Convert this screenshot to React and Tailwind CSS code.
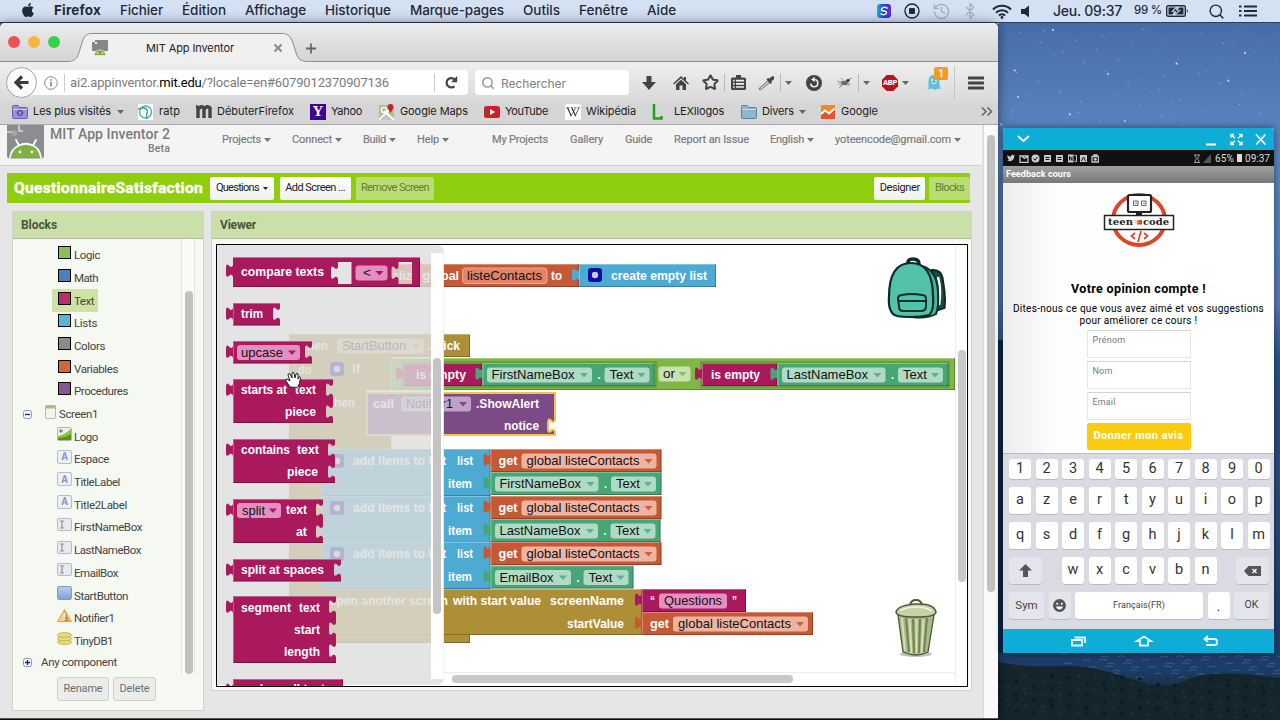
import React, { useLayoutEffect, useRef, useState } from "react";
import { Search, Star, History, Bluetooth } from "lucide-react";
import { FaApple, FaTwitter, FaWikipediaW } from "react-icons/fa";

// Text that is tracked in or out until it is exactly w pixels wide.
function Fit({ w, className = "", children }) {
  const ref = useRef(null);
  const [spacing, setSpacing] = useState(0);

  useLayoutEffect(() => {
    const natural = ref.current.getBoundingClientRect().width;
    setSpacing((w - natural) / ref.current.textContent.length);
  }, [w]);

  return (
    <span className={`block shrink-0 whitespace-nowrap ${className}`} style={{ width: w }}>
      <span ref={ref} style={{ letterSpacing: spacing }}>
        {children}
      </span>
    </span>
  );
}

function Caret({ className = "text-[#777]" }) {
  return (
    <svg width="7" height="4" viewBox="0 0 7 4" className={`shrink-0 ${className}`}>
      <path d="M0 0H7L3.5 4Z" fill="currentColor" />
    </svg>
  );
}

/* ---------- desktop ---------- */

const stars = Array.from({ length: 190 }, (_, i) => ({
  x: 998 + ((i * 97.3 + (i % 7) * 31) % 282),
  y: 23 + ((i * 53.7 + (i % 11) * 17) % 112),
  r: i % 17 === 0 ? 0.9 : i % 5 === 0 ? 0.55 : 0.35,
}));

const waves = Array.from({ length: 60 }, (_, i) => ({
  x: 1060 + ((i * 71.3) % 220),
  y: 654 + ((i * 13.7) % 24),
}));

const trees = Array.from({ length: 120 }, (_, i) => ({
  x: 998 + ((i * 61.7) % 282),
  y: 676 + ((i * 19.3) % 42),
}));

function Wallpaper() {
  return (
    <svg className="absolute inset-0" width="1280" height="720">
      <defs>
        <linearGradient id="sky" x1="0" y1="0" x2="0" y2="1">
          <stop offset="0" stopColor="#41659d" />
          <stop offset="0.06" stopColor="#4a72ad" />
          <stop offset="0.2" stopColor="#5b87c2" />
          <stop offset="0.42" stopColor="#5580b8" />
          <stop offset="0.5" stopColor="#2a568c" />
          <stop offset="0.7" stopColor="#254d80" />
          <stop offset="0.93" stopColor="#1c3c68" />
          <stop offset="0.96" stopColor="#16303f" />
          <stop offset="1" stopColor="#0c1519" />
        </linearGradient>
      </defs>
      <rect width="1280" height="720" fill="url(#sky)" />
      {stars.map((s, i) => (
        <circle key={i} cx={s.x} cy={s.y} r={s.r} fill="#dbe9fb" opacity={i % 17 === 0 ? 1 : 0.6} />
      ))}
      <path d="M998 340h5v313h-5z" fill="#0b2b50" />
      {waves.map((s, i) => (
        <path key={i} d={`M${s.x} ${s.y}q4-2 8 0`} stroke="#6f92bd" strokeWidth=".8" fill="none" opacity=".5" />
      ))}
      <path d="M998 662q30 6 60 4t70 12 60 2 92-2V720H998z" fill="#14252c" />
      {trees.map((t, i) => (
        <circle key={i} cx={t.x} cy={t.y} r="2" fill={i % 2 ? "#1d3236" : "#0c171b"} opacity=".7" />
      ))}
    </svg>
  );
}

const menus = [
  ["Fichier", 43],
  ["Édition", 44],
  ["Affichage", 61],
  ["Historique", 66],
  ["Marque-pages", 94],
  ["Outils", 37],
  ["Fenêtre", 49],
  ["Aide", 29],
];

function MenuBar() {
  return (
    <div className="relative flex h-[23px] items-center border-b border-[#2f3f5e] bg-[#d4e1f3] pl-5 font-[Inter,sans-serif] text-[13.500px] leading-none font-medium text-[#1f2a3d]">
      <FaApple size={16} className="-mt-0.5 shrink-0" />
      <div className="ml-[18px] flex gap-[19px]">
        <Fit w={47} className="font-bold">Firefox</Fit>
        {menus.map(([label, w]) => (
          <Fit key={label} w={w}>{label}</Fit>
        ))}
      </div>
      <div className="ml-[201px] flex items-center">
        <svg width="14" height="14" viewBox="0 0 14 14">
          <defs>
            <linearGradient id="snag" x1="0" x2="1">
              <stop offset="0" stopColor="#16b4e4" />
              <stop offset=".5" stopColor="#2440c4" />
              <stop offset="1" stopColor="#6d2bd0" />
            </linearGradient>
          </defs>
          <rect width="14" height="14" rx="3" fill="url(#snag)" />
          <path d="M10.500 4.500C9 2.500 5 3 4.500 5.500Q4.500 7 7 7T9.500 8.800C9 11 5.500 11.300 3.500 9.500" fill="none" stroke="#fff" strokeWidth="1.400" />
        </svg>
        <svg width="16" height="16" viewBox="0 0 16 16" className="ml-[13px]">
          <circle cx="8" cy="8" r="7" fill="none" stroke="currentColor" strokeWidth="1.400" />
          <rect x="5" y="5" width="6" height="6" rx="1" fill="currentColor" />
        </svg>
        <History size={19} strokeWidth={1.700} className="ml-[12px] text-[#a3aec2]" />
        <Bluetooth size={18} strokeWidth={1.700} className="ml-[10px] text-[#a3aec2]" />
        <svg width="20" height="15" viewBox="0 0 20 15" className="ml-[13px]">
          <g fill="none" stroke="currentColor" strokeWidth="2.100">
            <path d="M1 5.600a12.600 12.600 0 0 1 18 0" />
            <path d="M4 8.700a8.400 8.400 0 0 1 12 0" />
            <path d="M6.900 11.600a4.400 4.400 0 0 1 6.200 0" />
          </g>
          <circle cx="10" cy="13.500" r="1.400" fill="currentColor" />
        </svg>
        <svg width="10" height="13" viewBox="0 0 10 13" className="ml-[9px]">
          <path d="M0 4h3.500L8 .5V12.500L3.500 9H0Z" fill="currentColor" />
        </svg>
        <Fit w={69} className="ml-[22px] text-[14px]">Jeu. 09:37</Fit>
        <Fit w={28} className="ml-[12px] text-[11.500px]">99 %</Fit>
        <svg width="23" height="12" viewBox="0 0 23 12" className="ml-1">
          <rect x=".7" y=".7" width="18.600" height="10.600" rx="1.500" fill="none" stroke="currentColor" strokeWidth="1.400" />
          <path d="M2.500 2.500H9.500L5 6.800H8.500L6.500 9.500H2.500ZM17.500 9.500H10L15 5H11.500L13 2.500H17.500Z" fill="currentColor" />
          <path d="M11.500 1.500L6.500 6.800H10L8 10.500L13.500 5H10.200Z" fill="#1f2a3d" stroke="#d4e1f3" strokeWidth=".7" />
          <path d="M20.800 4q2 2 0 4z" fill="currentColor" />
        </svg>
        <Search size={17} strokeWidth={2} className="ml-[19px]" />
        <svg width="18" height="12" viewBox="0 0 18 12" className="ml-[14px]">
          <path d="M5 1.500H18M5 6H18M5 10.500H18M0 1.500H2.500M0 6H2.500M0 10.500H2.500" stroke="currentColor" strokeWidth="1.900" />
        </svg>
      </div>
    </div>
  );
}

/* ---------- browser chrome ---------- */

function TabStrip() {
  return (
    <div className="relative h-[39px] shrink-0 bg-linear-to-b from-[#ececec] to-[#d3d3d3]">
      <svg className="absolute inset-0" width="998" height="39">
        <path
          d="M0 38.500H68C78 38.500 78 32 81 23C84 13 85 10.500 94 10.500H280C290 10.500 291 14 294 23C297 33 298 38.500 307 38.500H998"
          fill="none"
          stroke="#8d8d8d"
        />
        <path d="M69 39C78 38.500 79 32 82 23C85 13 86 11 94 11H280C289 11 290 14 293 23C296 33 297 38.500 306 39Z" fill="#f0f0f0" />
        <circle cx="14" cy="19" r="6" fill="#ef4f57" />
        <circle cx="34" cy="19" r="6" fill="#f6b63c" />
        <circle cx="54" cy="19" r="6" fill="#35d14b" />
        <path d="M274.500 21.500l7 7m0-7l-7 7" stroke="#8c8c8c" strokeWidth="2.200" />
        <path d="M311 20.500v10M306 25.500h10" stroke="#666" strokeWidth="1.800" />
      </svg>
      <div className="relative flex h-full items-center pt-2.5 pl-[92px]">
        <svg width="16" height="16" viewBox="0 0 16 16">
          <path d="M0 2h3v2h2V2H3V0h13v11H0Z" fill="#858789" />
          <path d="M2 15.500Q2.500 10.500 8 9.800Q13.500 10.500 14 15.500Z" fill="#86ad3c" stroke="#f0f0f0" strokeWidth=".7" />
          <circle cx="5.500" cy="13" r=".8" fill="#fff" />
          <circle cx="10.500" cy="13" r=".8" fill="#fff" />
        </svg>
        <Fit w={88} className="ml-[38px] pt-0.5 font-[Inter,sans-serif] text-[11px] text-[#222]">MIT App Inventor</Fit>
      </div>
    </div>
  );
}

function Divider() {
  return <div className="h-[18px] w-px shrink-0 bg-[#b9b9b9]" />;
}

function NavBar() {
  return (
    <div className="flex h-[41px] shrink-0 items-center bg-linear-to-b from-[#efefef] to-[#d9d9d9] pl-1.5 text-[#444]">
      <div className="relative z-10 flex size-[31px] shrink-0 items-center justify-center rounded-full border border-[#a5a5a5] bg-[#fbfbfb]">
        <svg width="15" height="15" viewBox="0 0 15 15">
          <path d="M14.500 7.500H3M8 1.500L2 7.500L8 13.500" fill="none" stroke="#3d3d3d" strokeWidth="3.200" />
        </svg>
      </div>
      <div className="-ml-1.5 flex h-[25px] w-[437px] shrink-0 items-center rounded-r-sm bg-white pl-[13px]">
        <svg width="14" height="14" viewBox="0 0 14 14">
          <circle cx="7" cy="7" r="6.300" fill="none" stroke="#888" />
          <path d="M7 6v4.500M7 3.200v1.600" stroke="#777" strokeWidth="1.500" />
        </svg>
        <div className="ml-1.5 h-[18px] w-px bg-[#ccc]" />
        <Fit w={319} className="ml-[5px] font-[Roboto,sans-serif] text-[13px] text-[#7c7c7c]">
          ai2.appinventor.<span className="text-black">mit.edu</span>/?locale=en#6079012370907136
        </Fit>
        <div className="ml-[45px] h-[18px] w-px bg-[#ccc]" />
        <svg width="13" height="13" viewBox="0 0 13 13" className="ml-2.5">
          <path d="M9.500 10.200A4.700 4.700 0 1 1 10 3.800" fill="none" stroke="#444" strokeWidth="2.200" />
          <path d="M12.200 0V6.200H6Z" fill="#444" />
        </svg>
      </div>
      <div className="ml-[7px] flex h-[25px] w-[154px] shrink-0 items-center rounded-sm bg-white pl-1.5">
        <Search size={14} strokeWidth={2.600} className="text-[#999]" />
        <Fit w={65} className="ml-1.5 pt-0.5 font-[Inter,sans-serif] text-[12px] text-[#808080]">Rechercher</Fit>
      </div>
      <div className="ml-[5px] flex items-center">
        <div className="flex w-[30px] justify-center">
          <svg width="14" height="14" viewBox="0 0 14 14">
            <path d="M4.500 0h5v6H14L7 14L0 6H4.500Z" fill="#444" />
          </svg>
        </div>
        <div className="flex w-[33px] justify-center">
          <svg width="16" height="14" viewBox="0 0 16 14">
            <path d="M8 0L11 2.800V1h2v3.700L16 7.500L15 8.600L8 2.300L1 8.600L0 7.500Z" fill="#444" />
            <path d="M8 3.800L13 8.300V14H9.500V9.500H6.500V14H3V8.300Z" fill="#444" />
          </svg>
        </div>
        <div className="flex w-[27px] justify-center">
          <Star size={17} strokeWidth={2.800} />
        </div>
        <Divider />
        <div className="flex w-[27px] justify-center">
          <svg width="15" height="15" viewBox="0 0 15 15">
            <path d="M5 0h5v2.500H13.500q1.500 0 1.500 1.500V13.500q0 1.500-1.500 1.500H1.500Q0 15 0 13.500V4Q0 2.500 1.500 2.500H5Z" fill="#444" />
            <path d="M2 5.600H3.700M5 5.600H13M2 8.800H3.700M5 8.800H13M2 12H3.700M5 12H13" stroke="#eee" strokeWidth="1.700" />
          </svg>
        </div>
        <div className="flex w-[28px] justify-center">
          <svg width="17" height="14" viewBox="0 0 17 14">
            <path d="M1 12.500L9.500 5L11.500 7L3 13.500H1Z" fill="#c9c9c9" stroke="#777" />
            <path d="M8.500 3.500L12.500 8L14 6.500L13.300 5.200Q17 3.600 16 1T11.500 2.500L10 2Z" fill="#444" />
          </svg>
        </div>
        <Divider />
        <div className="flex w-[15px] justify-center"><Caret className="text-[#666]" /></div>
        <div className="flex w-[35px] justify-center">
          <svg width="16" height="16" viewBox="0 0 16 16">
            <circle cx="8" cy="8" r="8" fill="#444" />
            <path d="M4.600 8.500A3.600 3.600 0 1 0 8.500 4.500" fill="none" stroke="#eee" strokeWidth="1.600" />
            <path d="M8.800 1.800V7L5 4.400Z" fill="#eee" />
          </svg>
        </div>
        <div className="flex w-[27px] justify-center">
          <svg width="16" height="12" viewBox="0 0 16 12">
            <path d="M1 7L15 1M2 11L13 2M0 4L14 7M4 1L10 9M12 9L9 4M3 9L6 4" stroke="#777" strokeWidth=".7" />
            <ellipse cx="7.500" cy="6" rx="3.200" ry="2" fill="#6a6a6a" />
            <circle cx="11" cy="3.500" r="1.600" fill="#333" />
          </svg>
        </div>
        <Divider />
        <div className="flex w-[14px] justify-center"><Caret className="text-[#666]" /></div>
        <div className="ml-[5px] flex w-[24px] justify-center">
          <div className="relative flex h-4 w-4 items-center justify-center">
            <svg className="absolute inset-0" width="16" height="16" viewBox="0 0 16 16">
              <path d="M4.700 0H11.300L16 4.700V11.300L11.300 16H4.700L0 11.300V4.700Z" fill="#b81322" />
            </svg>
            <span className="relative font-[Roboto,sans-serif] text-[7.500px] font-black tracking-[-0.300px] text-white">ABP</span>
          </div>
        </div>
        <Caret className="text-[#666]" />
        <div className="relative ml-[12px] flex w-[25px] justify-center">
          <svg width="14" height="15" viewBox="0 0 14 15">
            <path d="M1.500 13V5.500Q2 0 7 0T12.500 5.500V11L14 14L10.500 13.500L8 15L5 13.500L0 14.500Z" fill="#5ec0dd" />
            <circle cx="5" cy="5" r="1" fill="#fff" />
            <circle cx="9" cy="5" r="1" fill="#fff" />
            <path d="M4.500 7.500Q7 10 9.500 7.500" stroke="#fff" fill="none" />
          </svg>
          <div className="absolute -top-[8px] left-[13px] flex h-[13px] w-[14px] items-center justify-center rounded-[2px] bg-[#f29d1e] font-[Roboto,sans-serif] text-[10px] font-bold text-white">
            1
          </div>
        </div>
        <div className="ml-[8px] h-[34px] w-px bg-[#c6c6c6]" />
        <svg width="16" height="14" viewBox="0 0 16 14" className="ml-[13px]">
          <path d="M1 2H15M1 7H15M1 12H15" stroke="#444" strokeWidth="3" strokeLinecap="round" />
        </svg>
      </div>
    </div>
  );
}

function Folder({ fill, stroke }) {
  return (
    <svg width="16" height="14" viewBox="0 0 16 14">
      <path d="M.5 1.500q0-1 1-1H6L7.500 2.500H14.500q1 0 1 1V12.500q0 1-1 1H1.500q-1 0-1-1Z" fill={fill} stroke={stroke} />
      <path d="M1 4.500H15" stroke="#fff" strokeOpacity=".5" />
    </svg>
  );
}

const bookmarks = [
  {
    label: "Les plus visités",
    w: 78,
    caret: "ml-1.5",
    box: "ml-3",
    gap: "ml-[5px]",
    icon: (
      <div className="relative">
        <Folder fill="#9c8fd6" stroke="#6a5bb0" />
        <svg className="absolute top-[4px] left-[4px]" width="8" height="8" viewBox="0 0 8 8">
          <circle cx="4" cy="4" r="2.400" fill="none" stroke="#54459c" strokeWidth="1.800" strokeDasharray="1.500 .5" />
        </svg>
      </div>
    ),
  },
  {
    label: "ratp",
    w: 21,
    box: "ml-[14px]",
    gap: "ml-[6px]",
    icon: (
      <svg width="15" height="16" viewBox="0 0 15 16">
        <rect width="15" height="16" fill="#fff" />
        <circle cx="7.500" cy="8" r="6" fill="none" stroke="#4bb8ad" strokeWidth="1.500" />
        <path d="M0 5L5 3.800Q9.500 4.500 9.500 8Q8 10 9 15" fill="none" stroke="#3f9fae" strokeWidth="1.400" />
      </svg>
    ),
  },
  {
    label: "DébuterFirefox",
    w: 77,
    box: "ml-4",
    gap: "ml-[5px]",
    icon: (
      <svg width="16" height="13" viewBox="0 0 16 13">
        <path d="M2 13V4Q2 1.700 0 1.700M2.500 4Q5.500 0 8 3.200V13M8.300 4Q11 0 14 3V13" fill="none" stroke="#444" strokeWidth="3.400" />
      </svg>
    ),
  },
  {
    label: "Yahoo",
    w: 31,
    box: "ml-4",
    gap: "ml-[5px]",
    icon: (
      <span className="flex size-4 items-center justify-center bg-[#400090] font-['Liberation_Serif',serif] text-[15px] font-bold text-white">Y</span>
    ),
  },
  {
    label: "Google Maps",
    w: 68,
    box: "ml-[17px]",
    gap: "ml-[6px]",
    icon: (
      <svg width="15" height="16" viewBox="0 0 15 16">
        <rect y="1" width="15" height="15" rx="1" fill="#a9c48d" />
        <path d="M0 16L14 2M5 7L15 16" stroke="#fff" strokeWidth="2.200" />
        <path d="M1 16L6.500 10.500L12 16Z" fill="#b9c4d6" />
        <circle cx="5" cy="6" r="2.600" fill="none" stroke="#fff" strokeWidth="1.400" />
        <path d="M11.500 9Q8.500 4.500 8.600 3a2.900 2.900 0 0 1 5.800 0Q14.400 4.500 11.500 9Z" fill="#c5222e" />
      </svg>
    ),
  },
  {
    label: "YouTube",
    w: 43,
    box: "ml-4",
    gap: "ml-[5px]",
    icon: (
      <svg width="16" height="12" viewBox="0 0 16 12">
        <rect width="16" height="12" rx="2.500" fill="#cc1f2c" />
        <path d="M6 3L11 6L6 9Z" fill="#fff" />
      </svg>
    ),
  },
  {
    label: "Wikipédia",
    w: 50,
    box: "ml-[17px]",
    gap: "ml-[5px]",
    icon: (
      <span className="flex size-4 items-center justify-center rounded-[2px] bg-white text-[#222]">
        <FaWikipediaW size={14} />
      </span>
    ),
  },
  {
    label: "LEXIlogos",
    w: 50,
    box: "ml-4",
    gap: "ml-[10px]",
    icon: (
      <svg width="12" height="16" viewBox="0 0 12 16">
        <path d="M2 0V14.500H9.500V12" fill="none" stroke="#15a80d" strokeWidth="2.500" />
      </svg>
    ),
  },
  {
    label: "Divers",
    w: 32,
    caret: "ml-[5px]",
    box: "ml-[17px]",
    gap: "ml-[5px]",
    icon: <Folder fill="#8db5d0" stroke="#5c8098" />,
  },
  {
    label: "Google",
    w: 37,
    box: "ml-[15px]",
    gap: "ml-[6px]",
    icon: (
      <svg width="14" height="14" viewBox="0 0 14 14">
        <rect width="14" height="14" rx="1" fill="#f0892c" />
        <path d="M0 10L4 6.500L8 9L14 3V14H0Z" fill="#e0552c" />
        <path d="M0 9L4 5.500L8 8.500L13.500 3.500" fill="none" stroke="#fff" strokeWidth="2" />
      </svg>
    ),
  },
];

function BookmarksBar() {
  return (
    <div className="flex h-[22px] shrink-0 items-center border-b border-[#a9a9a9] bg-[#d5d5d5] font-[Inter,sans-serif] text-[11px] text-[#1c1c1c]">
      <div className="-mt-[4px] flex items-center">
        {bookmarks.map((b) => (
          <div key={b.label} className={`flex items-center ${b.box}`}>
            {b.icon}
            <Fit w={b.w} className={b.gap}>{b.label}</Fit>
            {b.caret && <Caret className={`text-[#666] ${b.caret}`} />}
          </div>
        ))}
        <svg width="12" height="9" viewBox="0 0 12 9" className="ml-[103px]">
          <path d="M1 .5L5 4.500L1 8.500M6.500 .5L10.500 4.500L6.500 8.500" fill="none" stroke="#666" strokeWidth="1.600" />
        </svg>
      </div>
    </div>
  );
}

/* ---------- App Inventor page ---------- */

const navLeft = [
  ["Projects", 39],
  ["Connect", 40],
  ["Build", 23],
  ["Help", 22],
];
const navRight = [
  ["My Projects", 56],
  ["Gallery", 33],
  ["Guide", 27],
  ["Report an Issue", 75],
];

function AppHeader() {
  return (
    <div className="flex h-[41px] w-[982px] shrink-0 border-b border-[#d2d2d2] bg-[#f4f4f4] pl-[7px] text-[#7c7c7c]">
      <svg width="37" height="34" viewBox="0 0 37 34">
        <path d="M0 0H37V31Q37 33.500 34 33.500H3Q0 33.500 0 31Z" fill="#8b8d90" />
        <path d="M0 7H6M12 0V6H16" stroke="#c4c6c8" strokeWidth="2" fill="none" />
        <circle cx="7" cy="8" r="3" fill="#a5a7aa" />
        <path d="M3 32.500Q5 19 18.500 18.500T34 32.500Z" fill="#7fb241" />
        <path d="M3 32.500Q4.500 23.500 12 20.500L9 15M34 32.500Q32.500 23.500 26 20.500L29 15M12 20.500Q18.500 17 26 20.500" fill="none" stroke="#fff" strokeWidth="1.800" strokeLinecap="round" />
        <circle cx="13" cy="27" r="1.400" fill="#fff" />
        <circle cx="25" cy="27" r="1.400" fill="#fff" />
      </svg>
      <div className="ml-[6px] flex w-[120px] flex-col items-end pt-px font-medium">
        <Fit w={120} className="text-[14px] leading-4">MIT App Inventor 2</Fit>
        <Fit w={22} className="text-[10.500px] leading-[14px]">Beta</Fit>
      </div>
      <div className="ml-[52px] flex h-[30px] items-center gap-[21px] text-[11px] [-webkit-text-stroke:0.200px_#7c7c7c]">
        {navLeft.map(([label, w]) => (
          <div key={label} className="flex items-center gap-[3px]">
            <Fit w={w}>{label}</Fit>
            <Caret />
          </div>
        ))}
        <div className="ml-[22px] flex gap-[22px]">
          {navRight.map(([label, w]) => (
            <Fit key={label} w={w}>{label}</Fit>
          ))}
        </div>
        <div className="flex items-center gap-[3px]">
          <Fit w={34}>English</Fit>
          <Caret />
        </div>
        <div className="flex items-center gap-[3px]">
          <Fit w={116}>yoteencode@gmail.com</Fit>
          <Caret />
        </div>
      </div>
    </div>
  );
}

function ProjectBar() {
  return (
    <div className="mt-[7px] ml-[7px] flex h-[30px] w-[963px] shrink-0 items-center bg-[#8fce0e] pl-[7px] text-[11px]">
      <Fit w={189} className="pt-px text-[15.500px] font-bold text-white [-webkit-text-stroke:0.400px_#fff]">QuestionnaireSatisfaction</Fit>
      <div className="ml-[7px] flex h-[23px] w-[64px] items-center justify-center gap-1 rounded-[2px] bg-linear-to-b from-white to-[#f0f0f0] text-[#222]">
        <Fit w={43}>Questions</Fit>
        <svg width="5" height="3" viewBox="0 0 7 4"><path d="M0 0H7L3.500 4Z" fill="#222" /></svg>
      </div>
      <div className="ml-[6px] flex h-[23px] w-[71px] items-center justify-center rounded-[2px] bg-linear-to-b from-white to-[#f0f0f0] text-[#222]">
        <Fit w={60}>Add Screen ...</Fit>
      </div>
      <div className="ml-[5px] flex h-[23px] w-[79px] items-center justify-center rounded-[2px] bg-[#b9dd72] text-[#5d8230]">
        <Fit w={68}>Remove Screen</Fit>
      </div>
      <div className="ml-[440px] flex h-[23px] w-[51px] items-center justify-center rounded-[2px] bg-linear-to-b from-white to-[#f0f0f0] text-[#222]">
        <Fit w={40}>Designer</Fit>
      </div>
      <div className="ml-[4px] flex h-[23px] w-[41px] items-center justify-center rounded-[2px] bg-[#b9dd72] text-[#5d8230]">
        <Fit w={29}>Blocks</Fit>
      </div>
    </div>
  );
}

function LabelIcon() {
  return (
    <span className="flex h-[14px] w-[15px] items-center justify-center rounded-[2px] border border-[#b7bcc8] bg-[#eef0f8] text-[10px] font-bold text-[#8795c9]">A</span>
  );
}

function TextBoxIcon() {
  return (
    <svg width="15" height="13" viewBox="0 0 15 13">
      <rect x=".5" y=".5" width="14" height="12" rx="1.500" fill="#e9eaef" stroke="#b7bac4" />
      <path d="M3 3H7M5 3V10M3 10H7" stroke="#8b8fa3" strokeWidth="1.200" />
    </svg>
  );
}

const palette = [
  ["Logic", 26, "bg-[#8cbf57]"],
  ["Math", 24, "bg-[#4a80bd]"],
  ["Text", 20, "bg-[#b92e6d]"],
  ["Lists", 23, "bg-[#58b6d6]"],
  ["Colors", 31, "bg-[#8a8a8a]"],
  ["Variables", 44, "bg-[#d0683a]"],
  ["Procedures", 54, "bg-[#85588f]"],
];

const components = [
  [
    "Logo",
    24,
    <svg width="15" height="14" viewBox="0 0 15 14">
      <rect x=".5" y=".5" width="14" height="13" rx="1.500" fill="#eef2ea" stroke="#b3b8ad" />
      <path d="M1 9Q7 8 14 2V13H1Z" fill="#8fc23a" />
      <path d="M1 11Q8 11 14 7V13H1Z" fill="#4f9a12" />
      <circle cx="4" cy="4" r="1.800" fill="#888" />
    </svg>,
  ],
  ["Espace", 35, <LabelIcon />],
  ["TitleLabel", 46, <LabelIcon />],
  ["Title2Label", 53, <LabelIcon />],
  ["FirstNameBox", 68, <TextBoxIcon />],
  ["LastNameBox", 67, <TextBoxIcon />],
  ["EmailBox", 44, <TextBoxIcon />],
  ["StartButton", 54, <span className="block h-[14px] w-[15px] rounded-[2px] border border-[#7d9ccb] bg-linear-to-b from-[#b8cdec] to-[#7fa3d8]" />],
  [
    "Notifier1",
    40,
    <svg width="15" height="13" viewBox="0 0 15 13">
      <path d="M7.500 .5L14.500 12.500H.5Z" fill="#f3cf93" stroke="#dda04c" />
      <path d="M7.500 1V12H12Z" fill="#d98a2b" />
      <path d="M7.500 4V8.500M7.500 9.500V11" stroke="#fff" strokeWidth="1.500" />
    </svg>,
  ],
  [
    "TinyDB1",
    39,
    <svg width="15" height="13" viewBox="0 0 15 13">
      {[10, 6.500, 3].map((cy) => (
        <ellipse key={cy} cx="7.500" cy={cy} rx="7" ry="2.400" fill="#e9dd7a" stroke="#b7a949" strokeWidth=".8" />
      ))}
    </svg>,
  ],
];

function Toggle({ open }) {
  return (
    <svg width="9" height="9" viewBox="0 0 9 9" className="shrink-0">
      <rect x=".5" y=".5" width="8" height="8" rx="2" fill="#f3f3ff" stroke="#8f93c9" />
      <path d={open ? "M2 4.500H7" : "M2 4.500H7M4.500 2V7"} stroke="#22227a" strokeWidth="1.300" />
    </svg>
  );
}

function BlocksPanel() {
  return (
    <div className="flex h-[500px] w-[192px] shrink-0 flex-col border border-[#d0d2cc] bg-[#f6f9f2] text-[11.500px] text-[#444]">
      <div className="flex h-[27px] shrink-0 items-center border-b border-[#b4b9ab] bg-[#cbdfaa] pl-2 text-[12px] font-bold text-[#4a5538]">
        <Fit w={36}>Blocks</Fit>
      </div>
      <div className="flex h-[436px] shrink-0">
        <div className="w-[168px] pt-[5px]">
          {palette.map(([label, w, color]) => (
            <div key={label} className="flex h-[22.700px] pl-[39px]">
              <div className={`flex items-center pr-1 pl-1.5 ${label === "Text" ? "bg-[#cfe2a5]" : ""}`}>
                <span className={`-mt-[5px] size-[13px] border border-black ${color}`} />
                <Fit w={w} className="ml-[3px] pt-px">{label}</Fit>
              </div>
            </div>
          ))}
          <div className="flex h-[22.700px] items-center pl-[10px]">
            <Toggle open />
            <svg width="11" height="14" viewBox="0 0 11 14" className="-mt-1 ml-[13px]">
              <rect x=".5" y=".5" width="10" height="13" rx="1" fill="#f3f3f3" stroke="#b5b8b0" />
              <path d="M.5 .5H10.500V3.500H.5Z" fill="#a9c27b" />
            </svg>
            <Fit w={39} className="ml-[3px] pt-px">Screen1</Fit>
          </div>
          {components.map(([label, w, icon]) => (
            <div key={label} className="flex h-[22.700px] items-center pl-[44px]">
              <div className="-mt-[6px]">{icon}</div>
              <Fit w={w} className="ml-[2px] pt-px">{label}</Fit>
            </div>
          ))}
          <div className="flex h-[20px] items-center pl-[10px]">
            <Toggle />
            <Fit w={76} className="ml-[9px]">Any component</Fit>
          </div>
        </div>
        <div className="w-[14px] border-x border-[#e3e5df] bg-[#fafbf9] pt-[52px] pl-[3px]">
          <div className="h-[383px] w-2 rounded-full bg-[#c1c1c1]" />
        </div>
      </div>
      <div className="mt-[2px] flex gap-1 pl-[44px] text-[11px] text-[#6e6e6e]">
        <div className="flex h-6 w-[52px] items-center justify-center rounded-[3px] border border-[#cfd0cc] bg-[#ebedea]">
          <Fit w={39}>Rename</Fit>
        </div>
        <div className="flex h-6 w-[43px] items-center justify-center rounded-[3px] border border-[#cfd0cc] bg-[#ebedea]">
          <Fit w={30}>Delete</Fit>
        </div>
      </div>
    </div>
  );
}

/* ---------- block workspace ---------- */

const C = {
  text: "#a9195b",
  textPill: "#e48fbf",
  variable: "#c65933",
  variablePill: "#efb3a1",
  list: "#4dabd3",
  control: "#ae8f37",
  controlPill: "#d8c99b",
  logic: "#7eb744",
  logicPill: "#c9e1af",
  getter: "#47a676",
  getterPill: "#b0dac5",
  proc: "#7b4a87",
  procPill: "#bfa3c7",
};

// puzzle connector, drawn downwards (socket) and upwards (plug)
const SOCKET = "c0,3 -3,3 -4,1 q-3,-3 -3,3 v5 q0,5 3,2.500 c1,-2 4,-2 4,1.500";
const PLUG = "c0,-3.500 -3,-3.500 -4,-1.500 q-3,2.500 -3,-2.500 v-5 q0,-6 3,-3 c1,2 4,2 4,-1";

function Block({ x, y, w, h = 23, fill, sockets = [], plug = true, stroke }) {
  let d = `M${x},${y}H${x + w}`;
  sockets.forEach((sy) => {
    d += `V${sy + 4.5}${SOCKET}`;
  });
  d += `V${y + h}H${x}`;
  if (plug) d += `V${y + 17.5}${PLUG}`;
  d += "Z";
  return (
    <g>
      <path d={d} fill={fill} stroke={stroke} strokeWidth={stroke ? 2 : 0} />
      {!stroke && (
        <g fill="none">
          <path d={`M${x + 0.5},${y + h}V${y + 0.5}H${x + w}`} stroke="#fff" strokeOpacity=".3" />
          <path d={`M${x},${y + h - 0.5}H${x + w}`} stroke="#000" strokeOpacity=".25" />
          {!sockets.length && <path d={`M${x + w - 0.5},${y}V${y + h}`} stroke="#000" strokeOpacity=".25" />}
        </g>
      )}
    </g>
  );
}

// x1..x2 is the ink extent, y the vertical middle of the line
function Label({ x1, x2, y, children, dark }) {
  return (
    <text
      x={x1}
      y={y + 4}
      textLength={x2 - x1}
      lengthAdjust="spacingAndGlyphs"
      fontSize="13.500"
      fontWeight={dark ? 400 : 700}
      fill={dark ? "#111" : "#fff"}
    >
      {children}
    </text>
  );
}

function Pill({ x, y, w, fill, caret, t1, t2, children }) {
  return (
    <g>
      <rect x={x} y={y - 7.5} width={w} height="15" rx="3" fill={fill} />
      <Label x1={t1} x2={t2} y={y} dark>{children}</Label>
      {caret && <path d={`M${x + w - 12},${y - 2}h8l-4,4.500z`} fill={caret} />}
    </g>
  );
}

function Mutator({ x, y }) {
  return (
    <g>
      <rect x={x} y={y} width="14" height="14" rx="3" fill="#0a0fa5" />
      <circle cx={x + 7} cy={y + 7} r="3.200" fill="#c9c9ef" />
    </g>
  );
}

function GetGlobal({ x, y }) {
  return (
    <g>
      <Block x={x} y={y} w={171} fill={C.variable} />
      <Label x1={x + 8} x2={x + 27} y={y + 11.5}>get</Label>
      <Pill x={x + 31} y={y + 12} w={135} fill={C.variablePill} caret="#cf5f3c" t1={x + 36} t2={x + 149}>
        global listeContacts
      </Pill>
    </g>
  );
}

// component property getter; n is the width of the component name pill
function Getter({ x, y, name, n, w }) {
  return (
    <g>
      <Block x={x} y={y} w={w} fill={C.getter} />
      <Pill x={x + 4.5} y={y + 12} w={n} fill={C.getterPill} caret="#5cb08a" t1={x + 9} t2={x + n - 13}>{name}</Pill>
      <Label x1={x + n + 10} x2={x + n + 13} y={y + 12}>.</Label>
      <Pill x={x + n + 17} y={y + 12} w={45} fill={C.getterPill} caret="#5cb08a" t1={x + n + 22} t2={x + n + 46}>Text</Pill>
    </g>
  );
}

function Workspace() {
  return (
    <svg className="absolute inset-0 font-['Liberation_Sans',sans-serif]" width="750" height="441" viewBox="217 245 750 441">
      <Block x={363} y={264} w={216} fill={C.variable} plug={false} />
      <Label x1={370} x2={459} y={275.5}>initialize global</Label>
      <rect x="462.500" y="268" width="84.500" height="15.500" rx="3" fill="#e0846a" stroke="#eda793" />
      <Label x1={467} x2={542} y={276} dark>listeContacts</Label>
      <Label x1={551} x2={562} y={275.5}>to</Label>
      <Block x={579} y={264} w={137} fill={C.list} />
      <Mutator x={588} y={268} />
      <Label x1={611} x2={707} y={275.5}>create empty list</Label>

      <path d="M289,334H470V357H321V643H289Z" fill={C.control} />
      <path d="M289,634H470V643H289Z" fill={C.control} />
      <path d="M289,334.500H470" stroke="#fff" strokeOpacity=".3" />
      <path d="M469.500,335V357M391,356.500H470" stroke="#000" strokeOpacity=".25" />
      <Label x1={298} x2={328} y={345.5}>when</Label>
      <Pill x={337} y={346} w={87} fill={C.controlPill} caret="#ae8f37" t1={342} t2={406}>StartButton</Pill>
      <Label x1={428} x2={460} y={345.5}>.Click</Label>
      <Label x1={298} x2={312} y={369.5}>do</Label>

      <path d="M321,357H391V390H366V436H391V449H321Z" fill={C.control} stroke="#c9b06a" strokeWidth=".7" />
      <Mutator x={330} y={362} />
      <Label x1={352} x2={360} y={369}>if</Label>
      <Label x1={330} x2={355} y={403}>then</Label>

      <Block x={391} y={358} w={564} h={32} fill={C.logic} />
      <rect x="402" y="362" width="254" height="25" fill="none" stroke="#578631" />
      <rect x="701" y="362" width="248" height="25" fill="none" stroke="#578631" />
      <Block x={403} y={363} w={79} fill={C.text} />
      <Label x1={416} x2={466} y={374.5}>is empty</Label>
      <Getter x={482.5} y={363} w={172} n={105} name="FirstNameBox" />
      <Pill x={658.500} y={374} w={32} fill={C.logicPill} caret="#8fbd63" t1={663} t2={675}>or</Pill>
      <Block x={702} y={363} w={75} fill={C.text} />
      <Label x1={711} x2={760} y={374.5}>is empty</Label>
      <Getter x={777.5} y={363} w={171} n={103.500} name="LastNameBox" />

      <Block x={367} y={393} w={188} h={42} fill={C.proc} plug={false} sockets={[415]} stroke="#eec44f" />
      <Label x1={373} x2={394} y={403.5}>call</Label>
      <Pill x={401} y={404} w={70} fill={C.procPill} caret="#7b4a87" t1={406} t2={453}>Notifier1</Pill>
      <Label x1={476} x2={539} y={403.5}>.ShowAlert</Label>
      <Label x1={504} x2={539} y={425.5}>notice</Label>

      {[449, 496, 542].map((y) => (
        <g key={y}>
          <Block x={321} y={y} w={169.5} h={47} fill={C.list} plug={false} />
          <Mutator x={330} y={y + 5} />
          <Label x1={353} x2={446} y={y + 11.5}>add items to list</Label>
          <Label x1={457} x2={473} y={y + 11.5}>list</Label>
          <Label x1={448} x2={472} y={y + 34.5}>item</Label>
          <GetGlobal x={490.5} y={y} />
        </g>
      ))}
      <Getter x={490.5} y={472} w={171} n={103.500} name="FirstNameBox" />
      <Getter x={490.5} y={519} w={170} n={103} name="LastNameBox" />
      <Getter x={490.5} y={565.5} w={143} n={76} name="EmailBox" />

      <Block x={321} y={589} w={321} h={46} fill={C.control} plug={false} />
      <Label x1={329} x2={448} y={600.5}>open another screen</Label>
      <Label x1={453} x2={541} y={600.5}>with start value</Label>
      <Label x1={550} x2={624} y={600.5}>screenName</Label>
      <Label x1={567} x2={624} y={623.5}>startValue</Label>
      <Block x={642} y={589} w={104} fill={C.text} />
      <Label x1={650} x2={655} y={601}>“</Label>
      <Pill x={659} y={601} w={68} fill={C.textPill} t1={664} t2={722}>Questions</Pill>
      <Label x1={732} x2={737} y={601}>”</Label>
      <GetGlobal x={642} y={612} />
      <path d="M289,642.500H470M469.500,635V643" stroke="#000" strokeOpacity=".25" />
    </svg>
  );
}

function Flyout() {
  return (
    <svg className="absolute inset-0 font-['Liberation_Sans',sans-serif]" width="750" height="441" viewBox="217 245 750 441">
      <path d="M217 245H436Q444 245 444 253V677Q444 685 436 685H217Z" fill="#ddd" opacity=".8" />
      <rect x="431" y="253" width="12.500" height="426" fill="#fff" />
      <rect x="433" y="358" width="8" height="256" rx="4" fill="#c4c4c4" />

      <path
        d={`M233,257H420V287H233V277.500${PLUG}Z M338,262V266.500${SOCKET}V284H351.500V262Z M398.500,262V266.500${SOCKET}V284H412V262Z`}
        fill={C.text}
        fillRule="evenodd"
      />
      <path d="M233,257.500H420" stroke="#cf6a98" />
      <path d="M233,286.500H420M419.500,258V287" stroke="#7c1343" />
      <Label x1={241} x2={324} y={272}>compare texts</Label>
      <Pill x={355.500} y={273} w={32} fill={C.textPill} caret="#a9195b" t1={363} t2={371}>&lt;</Pill>

      <Block x={233} y={303} w={47} h={22.500} fill={C.text} sockets={[303]} />
      <Label x1={241} x2={263} y={314}>trim</Label>

      <Block x={233} y={341} w={79} h={22.500} fill={C.text} sockets={[341]} />
      <Pill x={237} y={352.500} w={63} fill={C.textPill} caret="#a9195b" t1={241} t2={283}>upcase</Pill>

      <Block x={233} y={379} w={100} h={44} fill={C.text} sockets={[379, 401]} />
      <Label x1={241} x2={287} y={390}>starts at</Label>
      <Label x1={295} x2={316} y={390}>text</Label>
      <Label x1={285} x2={316} y={412}>piece</Label>

      <Block x={233} y={439} w={102} h={44} fill={C.text} sockets={[439, 461]} />
      <Label x1={241} x2={290} y={450}>contains</Label>
      <Label x1={297} x2={319} y={450}>text</Label>
      <Label x1={287} x2={318} y={472}>piece</Label>

      <Block x={233} y={499} w={90} h={44} fill={C.text} sockets={[499, 521]} />
      <Pill x={237} y={510.500} w={44} fill={C.textPill} caret="#a9195b" t1={242} t2={265}>split</Pill>
      <Label x1={286} x2={307} y={510}>text</Label>
      <Label x1={296} x2={307} y={532}>at</Label>

      <Block x={233} y={559} w={108} h={22.500} fill={C.text} sockets={[559]} />
      <Label x1={241} x2={324} y={570}>split at spaces</Label>

      <Block x={233} y={596} w={103} h={67} fill={C.text} sockets={[596, 618, 640]} />
      <Label x1={241} x2={291} y={608}>segment</Label>
      <Label x1={299} x2={320} y={608}>text</Label>
      <Label x1={294} x2={320} y={630}>start</Label>
      <Label x1={284} x2={320} y={652}>length</Label>

      <Block x={233} y={679} w={110} h={22} fill={C.text} />
      <Label x1={241} x2={325} y={689}>replace all text</Label>

      {/* grabbing hand cursor */}
      <path
        d="M290 387l-4-6q-1-2 1-2l3 2-2-6q0-2 2-1l2 4v-5q1-2 2 0l1 5 1-4q1-1.500 2 0v5l1-2q1-1 1.500 .5l-1 6-2 4z"
        fill="#fff"
        stroke="#111"
        strokeWidth=".9"
      />
    </svg>
  );
}

function Backpack() {
  return (
    <svg className="absolute top-[12px] left-[670px]" width="60" height="64" viewBox="0 0 60 64">
      <path d="M45 13Q55 12 56 24Q59 40 57.500 51L48 54Z" fill="#1a4a42" stroke="#0c2b28" strokeWidth="2" />
      <path d="M51 20Q54.500 33 52 48" fill="none" stroke="#fff" strokeWidth="2.500" />
      <path d="M21 7Q20 2 26 2T32 7" fill="none" stroke="#0c2b28" strokeWidth="3.500" />
      <path d="M30 8Q50 10 51 35Q52 50 49 57Q40 62 25 60Z" fill="#48b39d" stroke="#0c2b28" strokeWidth="2" />
      <path d="M2 40Q2 6 24 6T46 40Q47 54 42 58Q35 60 22 60T6 57Q1 52 2 40Z" fill="#52c2ab" stroke="#0c2b28" strokeWidth="2.200" />
      <path d="M11 42Q11 38 15 38Q24 36 35 38Q39 38 39 42V49Q39 54 34 54H16Q12 54 12 49Z" fill="#52c2ab" stroke="#0c2b28" strokeWidth="2" />
      <path d="M11 44H39" stroke="#0c2b28" strokeWidth="2" />
    </svg>
  );
}

function TrashCan() {
  return (
    <svg className="absolute top-[354px] left-[677px]" width="44" height="60" viewBox="0 0 44 60">
      <ellipse cx="22" cy="55" rx="16" ry="3" fill="#000" opacity=".25" />
      <path d="M4 16L9 53Q22 59 34 53L40 16Z" fill="#a8bb86" stroke="#4d5a38" strokeWidth="1.300" />
      <path d="M12 19L15 53M19 20L20 54M26 20L25 54M33 19L30 53" stroke="#71834f" strokeWidth="2" />
      <path d="M8 19L11 52M15.500 20L17.500 54M22.500 20V54M29.500 20L27.500 54" stroke="#d5e0bb" strokeWidth="1.900" />
      <path d="M2 13Q4 6 22 5T42 13Q42 18 22 18T2 13Z" fill="#c6d3a9" stroke="#4d5a38" strokeWidth="1.500" />
      <path d="M6 12Q12 8 22 8T38 12" fill="none" stroke="#eef4de" strokeWidth="1.500" />
      <path d="M16 6Q17 1 22 1T28 6" fill="none" stroke="#4d5a38" strokeWidth="2" />
    </svg>
  );
}

function ViewerPanel() {
  return (
    <div className="flex h-[480px] w-[761px] shrink-0 flex-col border border-[#d0d2cc] bg-[#f6f9f2]">
      <div className="flex h-[27px] shrink-0 items-center border-b border-[#b4b9ab] bg-[#cbdfaa] pl-2 text-[12px] font-bold text-[#4a5538]">
        <Fit w={36}>Viewer</Fit>
      </div>
      <div className="relative mt-[5px] ml-1 h-[443px] w-[752px] overflow-hidden border border-black bg-white">
        <div className="absolute top-0 right-0 h-full w-[12px] border-l border-[#eee]">
          <div className="mt-[105px] ml-[2px] h-[232px] w-2 rounded-full bg-[#c9c9c9]" />
        </div>
        <div className="absolute bottom-0 left-0 h-[14px] w-[738px] border-t border-[#eee]">
          <div className="mt-[2px] ml-[235px] h-2 w-[341px] rounded-full bg-[#c9c9c9]" />
        </div>
        <Workspace />
        <Backpack />
        <TrashCan />
        <Flyout />
      </div>
    </div>
  );
}

function BrowserWindow() {
  return (
    <div className="absolute top-[23px] left-0 flex h-[696px] w-[998px] flex-col overflow-hidden rounded-t-[5px] border-b border-[#555] bg-[#e6e6e6] shadow-[0_0_12px_rgba(0,0,0,0.5)]">
      <TabStrip />
      <NavBar />
      <BookmarksBar />
      <div className="flex flex-1 font-[Roboto,sans-serif]">
        <div className="flex w-[983px] flex-col">
          <AppHeader />
          <ProjectBar />
          <div className="mt-[8px] flex gap-[7px] pl-[12px]">
            <BlocksPanel />
            <ViewerPanel />
          </div>
        </div>
        <div className="w-[15px] border-l border-[#d8d8d8] bg-[#fafafa] pt-[10px] pl-[3px]">
          <div className="h-[457px] w-2 rounded-full bg-[#c1c1c1]" />
        </div>
      </div>
    </div>
  );
}

/* ---------- phone mirror ---------- */

function TeenCodeLogo() {
  return (
    <div className="relative mt-[9px] h-[56px] w-[72px]">
      <svg className="absolute inset-0" width="72" height="56" viewBox="0 0 72 56">
        <ellipse cx="36" cy="28" rx="26" ry="25" fill="#fff" stroke="#d9482b" strokeWidth="4" />
        <path d="M33 21H39V24H33Z" fill="#222" />
        <rect x="25" y="3" width="23" height="17" rx="1.500" fill="#fff" stroke="#222" strokeWidth="2.200" />
        <path d="M30.500 9H35V13.500H30.500ZM38.500 9H43V13.500H38.500Z" fill="none" stroke="#555" strokeWidth=".9" />
        <path d="M32 11.200H34M40 11.200H42" stroke="#d9482b" />
        <rect x="1.500" y="23.500" width="69" height="14" fill="#fff" stroke="#222" strokeWidth="1.500" />
        <path d="M32 41L28.500 44L32 47M41 41L44.500 44L41 47M38 39L35 50" fill="none" stroke="#d9482b" strokeWidth="1.700" />
        <path d="M34 28H39V32.500H34Z" fill="#d9482b" />
      </svg>
      <div className="relative flex h-full items-start justify-center pt-[22px] font-['DejaVu_Serif',serif] text-[10px] leading-[15px] font-bold text-[#222]">
        <Fit w={25}>teen</Fit>
        <Fit w={10} className="text-center text-[8px] text-[#f4b9a8]">=</Fit>
        <Fit w={26}>code</Fit>
      </div>
    </div>
  );
}

function Key({ children, className = "w-[22px] bg-white" }) {
  return (
    <div className={`flex h-full items-center justify-center rounded-[3px] shadow-[0_1px_0_#b9bbc4] ${className}`}>
      {children}
    </div>
  );
}

function Keyboard() {
  return (
    <div className="h-[176px] shrink-0 border-t border-[#b9bbc3] bg-[#d9dae2] pt-[5px] pl-1.5 text-[14.500px] leading-none text-[#333]">
      <div className="flex h-5 gap-[4.500px]">
        {"1234567890".split("").map((k) => <Key key={k}>{k}</Key>)}
      </div>
      <div className="mt-2 flex h-[27px] gap-[4.500px]">
        {"azertyuiop".split("").map((k) => <Key key={k}>{k}</Key>)}
      </div>
      <div className="mt-2 flex h-[27px] gap-[4.500px]">
        {"qsdfghjklm".split("").map((k) => <Key key={k}>{k}</Key>)}
      </div>
      <div className="mt-2 flex h-[27px] gap-[4.500px]">
        <Key className="w-[33px] bg-[#e4e5ec]">
          <svg width="13" height="13" viewBox="0 0 13 13"><path d="M6.500 0L13 6.500H9V13H4V6.500H0Z" fill="#555" /></svg>
        </Key>
        <div className="w-[11px]" />
        {"wxcvbn".split("").map((k) => <Key key={k}>{k}</Key>)}
        <div className="w-[10.500px]" />
        <Key className="w-[33px] bg-[#e4e5ec]">
          <svg width="17" height="10" viewBox="0 0 17 10">
            <path d="M4.500 0H17V10H4.500L0 5Z" fill="#555" />
            <path d="M8.500 3l4 4m0-4l-4 4" stroke="#fff" strokeWidth="1.400" />
          </svg>
        </Key>
      </div>
      <div className="mt-2 flex h-[27px] gap-[4.500px] text-[#444]">
        <Key className="w-[35px] bg-[#e4e5ec] text-[11.500px]">Sym</Key>
        <Key className="w-[22px] bg-[#e4e5ec]">
          <svg width="13" height="13" viewBox="0 0 13 13">
            <circle cx="6.500" cy="6.500" r="6.500" fill="#555" />
            <circle cx="4.200" cy="4.800" r="1" fill="#fff" />
            <circle cx="8.800" cy="4.800" r="1" fill="#fff" />
            <path d="M3 7.500H10Q9 10.500 6.500 10.500T3 7.500Z" fill="#fff" />
          </svg>
        </Key>
        <Key className="w-[128px] bg-white"><Fit w={52} className="text-[9px]">Français(FR)</Fit></Key>
        <Key className="w-[22px] bg-white pt-1">.</Key>
        <Key className="w-[35px] bg-[#e4e5ec] text-[10.500px]">OK</Key>
      </div>
    </div>
  );
}

function StatusIcons() {
  return (
    <div className="flex items-center gap-1 text-[#c9c9c9]">
      <FaTwitter size={8} />
      <svg width="80" height="9" viewBox="0 0 80 9">
        <path d="M1 1V8.500H9V2H2.500L5.500 4.500L9 2" fill="none" stroke="currentColor" strokeWidth="1.300" />
        <circle cx="16.500" cy="4.500" r="4" fill="currentColor" />
        <path d="M14.500 4.500L16 6.200L18.500 3" fill="none" stroke="#111" />
        <path d="M25 1h7v7h-7zM37 1h7v7h-7zM49 .5h5.500v8H49zM61 1h7v7h-7z" fill="currentColor" />
        <path d="M26.500 3.500H30.500M26.500 5.500H30.500M38.500 3.500H42.500M38.500 5.500H42.500M50.500 6.500V2.500L53 6.500V2.500M62.500 7L64.500 3L66.500 7" stroke="#111" fill="none" />
        <path d="M55.500 1.500H57.500V7.500H55.500" stroke="currentColor" fill="none" />
        <path d="M73 2.500H79.500V8H73ZM75 2.500V1H78V2.500" fill="none" stroke="currentColor" strokeWidth="1.300" />
        <circle cx="76.300" cy="5.200" r="1.500" fill="currentColor" />
      </svg>
    </div>
  );
}

function Phone() {
  return (
    <div className="absolute top-[128px] left-[1003px] flex h-[525px] w-[271px] flex-col overflow-hidden rounded-[2px] bg-[#fdfdfd] font-[Roboto,sans-serif] shadow-[0_0_8px_rgba(0,0,0,0.5)]">
      <div className="flex h-[22px] shrink-0 items-center bg-[#0dadd8] pl-[14px]">
        <svg width="13" height="8" viewBox="0 0 13 8"><path d="M1 1L6.500 6L12 1" fill="none" stroke="#fff" strokeWidth="1.800" /></svg>
        <svg width="61" height="13" viewBox="0 0 61 13" className="ml-[176px]">
          <path d="M0 11.500H10" stroke="#fff" strokeWidth="2" />
          <path d="M25 4.500V1.500H28M33 1.500H36V4.500M36 8.500V11.500H33M28 11.500H25V8.500M25 1.500L29 5.200M36 1.500L32 5.200M25 11.500L29 7.800M36 11.500L32 7.800" fill="none" stroke="#fff" strokeWidth="1.400" />
          <path d="M50 1.500L59.500 11.500M59.500 1.500L50 11.500" stroke="#fff" strokeWidth="1.800" />
        </svg>
      </div>
      <div className="flex h-4 shrink-0 items-center justify-between bg-[#111] pr-1 pl-1 text-[#ddd]">
        <StatusIcons />
        <div className="flex items-center text-[10px]">
          <svg width="18" height="9" viewBox="0 0 18 9" className="mr-[3px]">
            <path d="M0 1H6M1 1Q1 4 3 4.500T5 8.500M5 1Q5 4 3 4.500T1 8.500M0 8.500H6" fill="none" stroke="#aaa" strokeWidth=".9" />
            <path d="M17 0V9H9Z" fill="#555" />
          </svg>
          <Fit w={19}>65%</Fit>
          <span className="mx-[3px] h-2 w-[5px] bg-[#ddd]" />
          <Fit w={25}>09:37</Fit>
        </div>
      </div>
      <div className="flex h-[17px] shrink-0 items-center bg-linear-to-b from-[#a0a0a0] to-[#787878] pl-[3px] text-white">
        <Fit w={65} className="text-[9px] font-bold">Feedback cours</Fit>
      </div>
      <div className="flex flex-1 flex-col items-center bg-linear-to-r from-[#ececec] via-[#fefefe] via-20% to-white text-black">
        <TeenCodeLogo />
        <Fit w={135} className="mt-[33px] text-[12.500px] leading-4 font-bold">Votre opinion compte !</Fit>
        <Fit w={251} className="mt-[6px] text-[10px] leading-3">Dites-nous ce que vous avez aimé et vos suggestions</Fit>
        <Fit w={118} className="text-[10px] leading-3">pour améliorer ce cours !</Fit>
        {[["Prénom", 33], ["Nom", 20], ["Email", 23]].map(([label, w]) => (
          <div key={label} className="mt-[3px] h-[28px] w-[104px] shrink-0 border border-[#e6e6e6] border-t-[#d5d5d5] bg-white pt-[3px] pl-[5px] text-[9px] text-[#777]">
            <Fit w={w}>{label}</Fit>
          </div>
        ))}
        <div className="mt-[3px] flex h-[27px] w-[104px] shrink-0 items-center justify-center rounded-[2px] bg-[#fbcb0f] text-[11px] font-bold text-white">
          <Fit w={90}>Donner mon avis</Fit>
        </div>
      </div>
      <Keyboard />
      <div className="flex h-[24px] shrink-0 items-center bg-[#0dadd8] pl-[68px]">
        <svg width="148" height="12" viewBox="0 0 148 12" fill="none" stroke="#e9fbff" strokeWidth="1.800">
          <path d="M1 5H11V10.500H1ZM3.500 2.500H14V8" />
          <path d="M66 6L73 1.500L80 6H77V10.500H69V6Z" />
          <path d="M137 1L133.500 4L137 7M134 4H143.500Q146 4 146 6.500V8Q146 10 143.500 10H135" />
        </svg>
      </div>
    </div>
  );
}

export default function App() {
  return (
    <div className="relative h-[720px] w-[1280px] overflow-hidden bg-[#0c1519]">
      <Wallpaper />
      <MenuBar />
      <BrowserWindow />
      <Phone />
    </div>
  );
}
